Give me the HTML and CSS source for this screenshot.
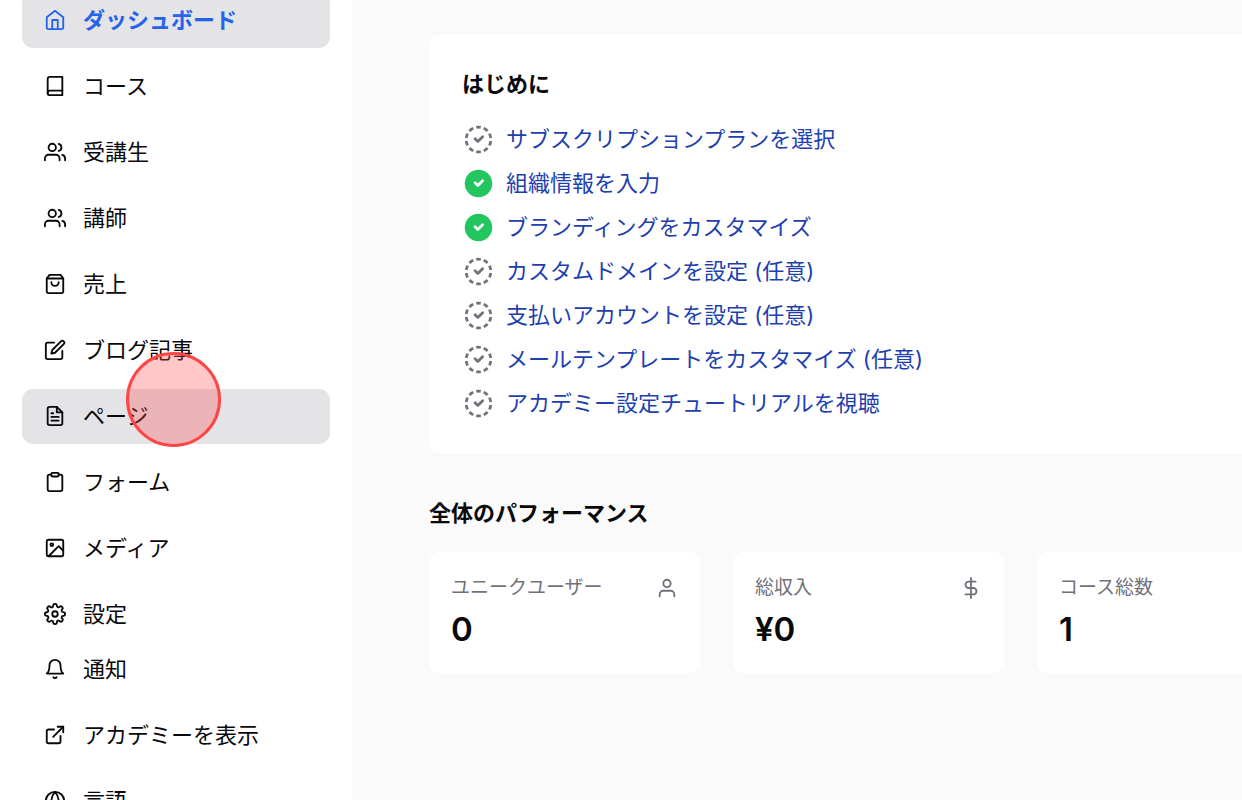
FILE: index.html
```html
<!DOCTYPE html>
<html lang="ja">
<head>
<meta charset="utf-8">
<meta name="viewport" content="width=device-width, initial-scale=1">
<title>ダッシュボード</title>
<link rel="stylesheet" href="styles.css">
</head>
<body>
<svg class="sprite" aria-hidden="true">
  <symbol id="pending" viewBox="0 0 24 24">
    <circle cx="12" cy="12" r="9" pathLength="100" stroke-linecap="butt" stroke-dasharray="6 4" stroke-dashoffset="8"/>
    <path d="m9.500 11.500 2 2 3.500-3.500"/>
  </symbol>
  <symbol id="done" viewBox="0 0 24 24">
    <circle class="disc" cx="12" cy="12" r="10"/>
    <path class="tick" d="m9.500 11.500 2 2 3.500-3.500"/>
  </symbol>
  <symbol id="users" viewBox="0 0 24 24">
    <path d="M17 21v-2a4 4 0 0 0-4-4H5a4 4 0 0 0-4 4v2"/><circle cx="9" cy="7" r="4"/><path d="M23 21v-2a4 4 0 0 0-3-3.870"/><path d="M16 3.130a4 4 0 0 1 0 7.750"/>
  </symbol>
</svg>
<div class="app">
  <aside class="sidebar">
    <nav class="menu" aria-label="メイン">
      <a class="item active" href="#"><svg class="icon" viewBox="0 0 24 24"><path d="m3 9 9-7 9 7v11a2 2 0 0 1-2 2H5a2 2 0 0 1-2-2z"/><path d="M9 22V12h6v10"/></svg>ダッシュボード</a>
      <a class="item" href="#"><svg class="icon" viewBox="0 0 24 24"><path d="M4 19.500A2.500 2.500 0 0 1 6.500 17H20"/><path d="M6.500 2H20v20H6.500A2.500 2.500 0 0 1 4 19.500v-15A2.500 2.500 0 0 1 6.500 2z"/></svg>コース</a>
      <a class="item" href="#"><svg class="icon"><use href="#users"/></svg>受講生</a>
      <a class="item" href="#"><svg class="icon"><use href="#users"/></svg>講師</a>
      <a class="item" href="#"><svg class="icon" viewBox="0 0 24 24"><path d="M6 2 3 6v14a2 2 0 0 0 2 2h14a2 2 0 0 0 2-2V6l-3-4z"/><path d="M3 6h18"/><path d="M16 10a4 4 0 0 1-8 0"/></svg>売上</a>
      <a class="item" href="#"><svg class="icon" viewBox="0 0 24 24"><path d="M11 4H4a2 2 0 0 0-2 2v14a2 2 0 0 0 2 2h14a2 2 0 0 0 2-2v-7"/><path d="M18.500 2.500a2.121 2.121 0 0 1 3 3L12 15l-4 1 1-4z"/></svg>ブログ記事</a>
      <a class="item hover" href="#"><svg class="icon" viewBox="0 0 24 24"><path d="M14 2H6a2 2 0 0 0-2 2v16a2 2 0 0 0 2 2h12a2 2 0 0 0 2-2V8z"/><path d="M14 2v6h6"/><path d="M16 13H8"/><path d="M16 17H8"/><path d="M10 9H8"/></svg>ページ<span class="pointer"></span></a>
      <a class="item" href="#"><svg class="icon" viewBox="0 0 24 24"><path d="M16 4h2a2 2 0 0 1 2 2v14a2 2 0 0 1-2 2H6a2 2 0 0 1-2-2V6a2 2 0 0 1 2-2h2"/><rect x="8" y="2" width="8" height="4" rx="1"/></svg>フォーム</a>
      <a class="item" href="#"><svg class="icon" viewBox="0 0 24 24"><rect x="3" y="3" width="18" height="18" rx="2"/><circle cx="8.500" cy="8.500" r="1.500"/><path d="m21 15-5-5L5 21"/></svg>メディア</a>
      <a class="item" href="#"><svg class="icon" viewBox="0 0 24 24"><circle cx="12" cy="12" r="3"/><path d="M19.400 15a1.650 1.650 0 0 0 .33 1.820l.06.06a2 2 0 0 1-2.830 2.830l-.06-.06a1.650 1.650 0 0 0-1.820-.33 1.650 1.650 0 0 0-1 1.510V21a2 2 0 0 1-4 0v-.09A1.650 1.650 0 0 0 9 19.400a1.650 1.650 0 0 0-1.820.33l-.06.06a2 2 0 0 1-2.830-2.830l.06-.06a1.650 1.650 0 0 0 .33-1.820 1.650 1.650 0 0 0-1.510-1H3a2 2 0 0 1 0-4h.09A1.650 1.650 0 0 0 4.600 9a1.650 1.650 0 0 0-.33-1.820l-.06-.06a2 2 0 0 1 2.830-2.830l.06.06a1.650 1.650 0 0 0 1.820.33H9a1.650 1.650 0 0 0 1-1.510V3a2 2 0 0 1 4 0v.09a1.650 1.650 0 0 0 1 1.510 1.650 1.650 0 0 0 1.820-.33l.06-.06a2 2 0 0 1 2.830 2.830l-.06.06a1.650 1.650 0 0 0-.33 1.820V9a1.650 1.650 0 0 0 1.510 1H21a2 2 0 0 1 0 4h-.09a1.650 1.650 0 0 0-1.510 1z"/></svg>設定</a>
    </nav>
    <nav class="menu" aria-label="補助">
      <a class="item" href="#"><svg class="icon" viewBox="0 0 24 24"><path d="M18 8A6 6 0 0 0 6 8c0 7-3 9-3 9h18s-3-2-3-9"/><path d="M13.730 21a2 2 0 0 1-3.460 0"/></svg>通知</a>
      <a class="item" href="#"><svg class="icon" viewBox="0 0 24 24"><path d="M15 3h6v6"/><path d="M10 14 21 3"/><path d="M18 13v6a2 2 0 0 1-2 2H5a2 2 0 0 1-2-2V8a2 2 0 0 1 2-2h6"/></svg>アカデミーを表示</a>
      <a class="item" href="#"><svg class="icon" viewBox="0 0 24 24"><circle cx="12" cy="12" r="10"/><path d="M2 12h20"/><path d="M12 2a15.300 15.300 0 0 1 4 10 15.300 15.300 0 0 1-4 10 15.300 15.300 0 0 1-4-10 15.300 15.300 0 0 1 4-10z"/></svg>言語</a>
    </nav>
  </aside>
  <main class="main">
    <section class="card start">
      <h2 class="heading">はじめに</h2>
      <ul class="steps">
        <li><a class="step" href="#"><svg class="mark"><use href="#pending"/></svg>サブスクリプションプランを選択</a></li>
        <li><a class="step" href="#"><svg class="mark"><use href="#done"/></svg>組織情報を入力</a></li>
        <li><a class="step" href="#"><svg class="mark"><use href="#done"/></svg>ブランディングをカスタマイズ</a></li>
        <li><a class="step" href="#"><svg class="mark"><use href="#pending"/></svg>カスタムドメインを設定 (任意)</a></li>
        <li><a class="step" href="#"><svg class="mark"><use href="#pending"/></svg>支払いアカウントを設定 (任意)</a></li>
        <li><a class="step" href="#"><svg class="mark"><use href="#pending"/></svg>メールテンプレートをカスタマイズ (任意)</a></li>
        <li><a class="step" href="#"><svg class="mark"><use href="#pending"/></svg>アカデミー設定チュートリアルを視聴</a></li>
      </ul>
    </section>
    <section class="performance">
      <h2 class="heading">全体のパフォーマンス</h2>
      <div class="stats">
        <div class="card stat">
          <div class="label">ユニークユーザー<svg class="icon" viewBox="0 0 24 24"><path d="M20 21v-2a4 4 0 0 0-4-4H8a4 4 0 0 0-4 4v2"/><circle cx="12" cy="7" r="4"/></svg></div>
          <div class="value">0</div>
        </div>
        <div class="card stat">
          <div class="label">総収入<svg class="icon" viewBox="0 0 24 24"><path d="M12 1v22"/><path d="M17 5H9.500a3.500 3.500 0 0 0 0 7h5a3.500 3.500 0 0 1 0 7H6"/></svg></div>
          <div class="value">¥0</div>
        </div>
        <div class="card stat">
          <div class="label">コース総数</div>
          <div class="value">1</div>
        </div>
      </div>
    </section>
  </main>
</div>
</body>
</html>
```
FILE: styles.css
```css
* { box-sizing: border-box; margin: 0; padding: 0; }

body {
  background: #fafafa;
  color: #09090b;
  font: 22px/33px Inter, "Noto Sans CJK JP", sans-serif;
  overflow: hidden;
}

a { color: inherit; text-decoration: none; }
ul { list-style: none; }
.sprite { position: absolute; width: 0; height: 0; }

.app { display: flex; height: 100vh; overflow: hidden; }

.sidebar {
  flex: 0 0 352px;
  background: #fff;
  padding: 0 22px;
  margin-top: -7px;
}

.menu { display: flex; flex-direction: column; gap: 11px; }

.item {
  position: relative;
  display: flex;
  align-items: center;
  gap: 17px;
  height: 55px;
  padding: 0 22px 1px;
  border-radius: 11px;
}
.item.active, .item.hover { background: #e4e4e7; }
.item.active { color: #2563eb; font-weight: 700; }

.icon, .mark {
  flex: none;
  fill: none;
  stroke: currentColor;
  stroke-width: 2;
  stroke-linecap: round;
  stroke-linejoin: round;
}
.icon { width: 22px; height: 22px; }
.mark { width: 33px; height: 33px; color: #71717a; }
.disc { fill: #22c55e; stroke: none; }
.tick { stroke: #fff; }

/* Click highlight over the hovered entry */
.pointer {
  position: absolute;
  left: 104px;
  top: -37px;
  width: 95px;
  height: 95px;
  border: 3px solid #ff4545;
  border-radius: 50%;
  background: rgba(255, 69, 69, 0.3);
}

.main {
  flex: 1 0 auto;
  padding: 35px 77px;
}

.card { background: #fff; border-radius: 11px; }
.heading { font-size: 22px; line-height: 33px; font-weight: 700; }

.start { padding: 33px; }
.steps { display: flex; flex-direction: column; gap: 11px; margin-top: 22px; }
.step { display: flex; align-items: center; gap: 11px; color: #1e40af; }

.performance { margin-top: 44px; }
.stats { display: grid; grid-template-columns: repeat(3, 271px); gap: 33px; margin-top: 22px; }
.stat { padding: 22px; }
.label {
  display: flex;
  align-items: center;
  justify-content: space-between;
  font-size: 19px;
  line-height: 27px;
  color: #71717a;
}
.value { font-size: 33px; line-height: 44px; font-weight: 600; margin-top: 6px; }
```
